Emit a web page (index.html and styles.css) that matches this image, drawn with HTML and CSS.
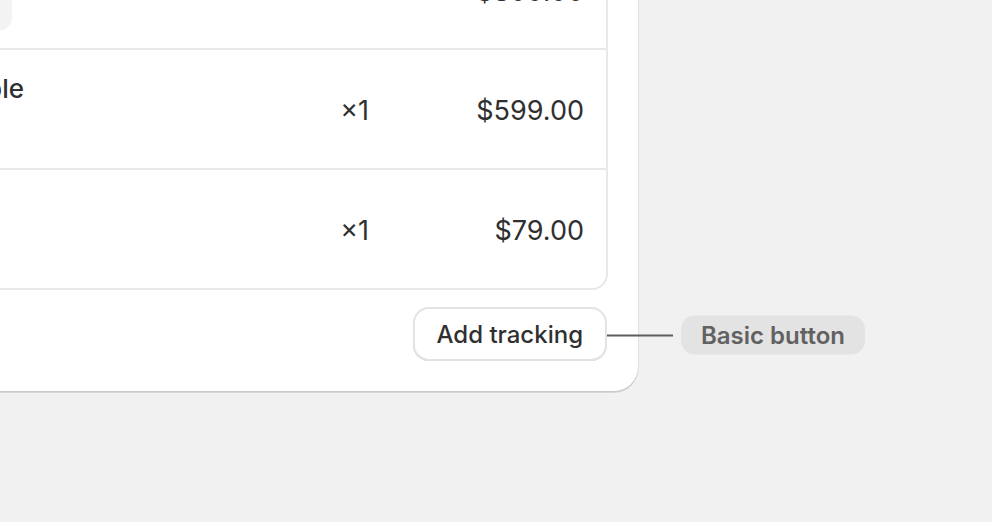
FILE: index.html
```html
<!DOCTYPE html>
<html lang="en">
<head>
<meta charset="utf-8">
<title>Fulfillment card</title>
<link rel="stylesheet" href="styles.css">
</head>
<body>
<section class="card">
  <div class="items">
    <div class="row">
      <div class="cell-main"><div class="badge-block"></div></div>
      <div class="qty"></div>
      <div class="price price-top">$899.00</div>
    </div>
    <div class="row">
      <div class="cell-main">
        <div class="title title-long">Record Player Turntable</div>
        <div class="sub">SKU</div>
      </div>
      <div class="qty">×1</div>
      <div class="price">$599.00</div>
    </div>
    <div class="row">
      <div class="cell-main">
        <div class="title">Cable</div>
        <div class="sub">SKU</div>
      </div>
      <div class="qty">×1</div>
      <div class="price">$79.00</div>
    </div>
  </div>
  <div class="footer">
    <div class="btn-wrap">
      <button class="btn" type="button">Add tracking</button>
      <div class="annotation">
        <span class="connector"></span>
        <span class="label">Basic button</span>
      </div>
    </div>
  </div>
</section>
</body>
</html>
```

FILE: styles.css
```css
* { box-sizing: border-box; }
html, body {
  margin: 0;
  padding: 0;
  background: #f1f1f1;
  width: 992px;
  height: 522px;
  overflow: hidden;
  font-family: Inter, "Liberation Sans", sans-serif;
  color: #303030;
}
.card {
  width: 1000px;
  margin-left: -362px;
  margin-top: -102px;
  background: #ffffff;
  border-radius: 24px;
  padding: 30px;
  box-shadow: 0 2px 0 0 rgba(26, 26, 26, 0.12), 0 0 0 1px rgba(26, 26, 26, 0.07);
}
.items {
  border: 2px solid #e8e8e8;
  border-radius: 16px;
  overflow: hidden;
}
.row {
  display: grid;
  grid-template-columns: 1fr auto 215px;
  align-items: center;
  height: 120px;
  padding: 0 22px 0 24px;
  border-bottom: 2px solid #e8e8e8;
  font-size: 26px;
  line-height: 40px;
}
.row:last-child { border-bottom: none; height: 118px; }
.badge-block {
  width: 318px;
  height: 82px;
  background: #f3f3f3;
  border-radius: 12px;
}
.title { font-weight: 500; white-space: nowrap; }
.title-long { width: 330px; text-align: right; }
.sub { color: #616161; width: 10px; overflow: hidden; }
.qty, .price {
  text-align: right;
  font-size: 27px;
  padding-top: 3px;
}
.price-top { padding-top: 6px; }
.footer {
  display: flex;
  justify-content: flex-end;
  padding-top: 17px;
  padding-right: 1px;
}
.btn-wrap { position: relative; }
.btn {
  height: 54px;
  padding: 0 24px;
  border: none;
  border-radius: 16px;
  background: #ffffff;
  font-family: Inter, "Liberation Sans", sans-serif;
  font-size: 24px;
  font-weight: 500;
  color: #303030;
  box-shadow: inset 0 0 0 2px #e3e3e3, inset 0 -2px 0 0 #c0c0c0;
}
.annotation {
  position: absolute;
  left: 100%;
  top: 50%;
  transform: translateY(-50%);
  display: flex;
  align-items: center;
  margin-top: 1px;
}
.connector {
  display: block;
  width: 66px;
  height: 2px;
  background: #5e5e5e;
}
.label {
  margin-left: 8px;
  height: 39px;
  display: flex;
  align-items: center;
  padding: 0 20px;
  background: #e3e3e3;
  border-radius: 14px;
  color: #616161;
  font-size: 24px;
  font-weight: 600;
  white-space: nowrap;
}
```
